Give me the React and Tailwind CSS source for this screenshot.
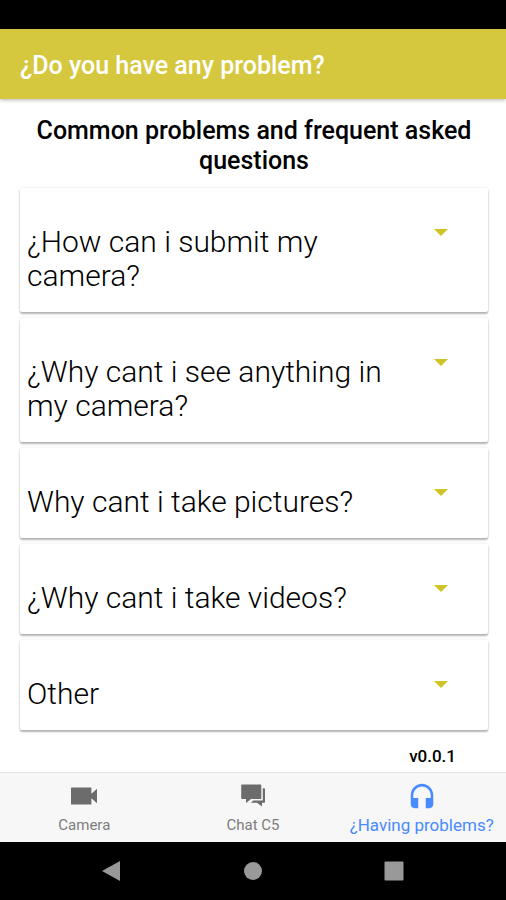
import { useState } from 'react';
import { IoMdHeadset } from 'react-icons/io';

const questions = [
  { id: 1, title: '¿How can i submit my camera?' },
  { id: 2, title: '¿Why cant i see anything in my camera?' },
  { id: 3, title: 'Why cant i take pictures?' },
  { id: 4, title: '¿Why cant i take videos?' },
  { id: 5, title: 'Other' },
];

const CameraIcon = ({ className }) => (
  <svg viewBox="0 0 30 30" className={className} fill="currentColor" aria-hidden="true">
    <path d="M2.6 6.5h19.2a.6.6 0 0 1 .6.6v5.6l5.6-5v14.6l-5.6-5v5.6a.6.6 0 0 1-.6.6H2.6a.6.6 0 0 1-.6-.6V7.1a.6.6 0 0 1 .6-.6z" />
  </svg>
);

const ChatIcon = ({ className }) => (
  <svg viewBox="0 0 30 30" className={className} fill="currentColor" aria-hidden="true">
    <path d="M4 3.5h18.500a.8.8 0 0 1 .8.8v12.900a.8.8 0 0 1-.8.8H13l-5 4v-4H4a.8.8 0 0 1-.8-.8V4.300a.8.8 0 0 1 .8-.8z" />
    <path d="M24.800 7.300h1.400a.8.8 0 0 1 .8.800v12.900a.8.8 0 0 1-.8.8H24V25.500l-5-3.700h-6.200l2.600-2.200h9.400z" />
  </svg>
);

const tabs = [
  { id: 'camera', label: 'Camera', icon: CameraIcon },
  { id: 'chat', label: 'Chat C5', icon: ChatIcon },
  { id: 'help', label: '¿Having problems?', icon: IoMdHeadset },
];

const QuestionCard = ({ title, open, onToggle }) => (
  <button
    type="button"
    aria-expanded={open}
    onClick={onToggle}
    className="flex w-full items-start justify-between rounded-xs bg-white pt-[37px] pr-10 pb-[19px] pl-[7px] text-left shadow-[0_2px_2px_rgba(0,0,0,0.28),0_0_3px_rgba(0,0,0,0.1)]"
  >
    <span className="max-w-[368px] text-3xl leading-[34px] font-light text-black">{title}</span>
    <svg viewBox="0 0 14 7" className="mt-1 h-[7px] w-3.5 shrink-0 fill-[#cfc326]" aria-hidden="true">
      <path d="M0 0h14L7 7z" />
    </svg>
  </button>
);

const App = () => {
  const [openId, setOpenId] = useState(null);
  const [activeTab, setActiveTab] = useState('help');

  return (
    <div className="flex min-h-screen flex-col bg-white font-[Roboto,sans-serif]">
      <div className="h-[29px] bg-black" />
      <header className="flex h-[70px] items-center bg-[#d5c83f] px-5 pt-1 shadow-[0_1px_4px_rgba(0,0,0,0.3)]">
        <h1 className="text-[25px] leading-8 font-medium text-white">¿Do you have any problem?</h1>
      </header>

      <main className="flex flex-1 flex-col px-[18px] pt-[17px] pl-5">
        <h2 className="text-center text-[25px] leading-[30px] font-medium text-black">
          Common problems and frequent asked questions
        </h2>
        <div className="mt-3 flex flex-col gap-1.5">
          {questions.map((question) => (
            <QuestionCard
              key={question.id}
              title={question.title}
              open={openId === question.id}
              onToggle={() => setOpenId(openId === question.id ? null : question.id)}
            />
          ))}
        </div>
        <p className="mt-3.5 pr-8 text-right text-[17px] leading-6 font-medium text-black">v0.0.1</p>
      </main>

      <nav className="grid h-[70px] grid-cols-3 border-t border-[#e4e4e4] bg-[#f7f7f7]">
        {tabs.map(({ id, label, icon: Icon }) => (
          <button
            key={id}
            type="button"
            onClick={() => setActiveTab(id)}
            className={
              activeTab === id
                ? 'flex flex-col items-center gap-0.5 pt-2 text-[17px] leading-6 whitespace-nowrap text-[#488aff]'
                : 'flex flex-col items-center gap-0.5 pt-2 text-[15px] leading-6 whitespace-nowrap text-[#7d7d7d]'
            }
          >
            <Icon className={activeTab === id ? 'size-[30px]' : 'size-[30px] text-[#6c6c6c]'} />
            <span>{label}</span>
          </button>
        ))}
      </nav>

      <div className="grid h-[58px] grid-cols-3 items-center bg-black px-[42px] text-[#999999]">
        <button type="button" aria-label="Back" className="flex justify-center">
          <svg viewBox="0 0 20 20" className="size-5 fill-current"><path d="M18 0v20L0 10z" /></svg>
        </button>
        <button type="button" aria-label="Home" className="flex justify-center">
          <svg viewBox="0 0 20 20" className="size-5 fill-current"><circle cx="10" cy="10" r="9" /></svg>
        </button>
        <button type="button" aria-label="Recent apps" className="flex justify-center">
          <svg viewBox="0 0 20 20" className="size-5 fill-current"><rect x="0.500" y="0.500" width="19" height="19" rx="1" /></svg>
        </button>
      </div>
    </div>
  );
};

export default App;
